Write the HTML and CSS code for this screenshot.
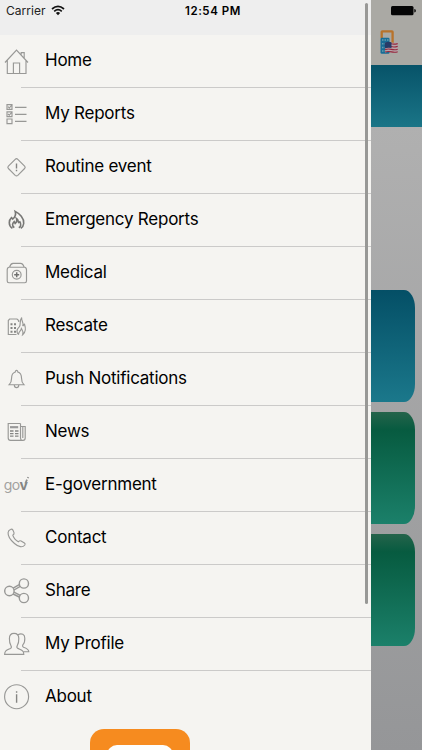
FILE: index.html
```html
<!DOCTYPE html>
<html lang="en">
<head>
    <meta charset="UTF-8">
    <meta name="viewport" content="width=device-width, initial-scale=1.0">
    <title>Menu</title>
    <link rel="stylesheet" href="styles.css">
</head>
<body>
    <div class="screen">
        <nav class="drawer">
            <div class="status-bar">
                <span class="carrier">Carrier</span>
                <svg class="wifi" width="14" height="11" viewBox="0 0 14 11">
                    <path d="M1 4 Q7 -1.2 13 4 M3.2 6.3 Q7 3 10.8 6.3" fill="none" stroke="#111" stroke-width="1.7"/>
                    <path d="M4.9 7.9 Q7 6.3 9.1 7.9 L7 10.2 Z" fill="#111"/>
                </svg>
                <span class="time">12:54 PM</span>
            </div>

            <ul class="menu">
                <li>
                    <svg class="icon" viewBox="0 0 34 52"><path d="M5 27.5 L16.5 15 L28 27.5 M7.3 25.5 V38.5 H26 V25.5 M13.4 38.5 V28 H19.6 V38.5 M21.2 19.5 V17.6 H24.2 V23"/></svg>
                    <span>Home</span>
                </li>
                <li>
                    <svg class="icon" viewBox="0 0 34 52"><path d="M7 16.6 H12 V21.4 H7 Z M7 23.8 H12 V28.6 H7 Z M7 31 H12 V35.6 H7 Z M15 19.3 H26.5 M15 26.3 H26.5 M15 33.4 H26.5 M8 18.7 L9.3 20 L12 16.8 M8 26 L9.3 27.2 L12 24"/></svg>
                    <span>My Reports</span>
                </li>
                <li>
                    <svg class="icon" viewBox="0 0 34 52"><path d="M15.2 18.3 Q16.5 17 17.8 18.3 L24.6 25.1 Q25.8 26.3 24.6 27.5 L17.8 34.3 Q16.5 35.5 15.2 34.3 L8.4 27.5 Q7.2 26.3 8.4 25.1 Z"/><path class="bold" d="M16.5 22.5 V27.4 M16.5 28.8 V30.2"/></svg>
                    <span>Routine event</span>
                </li>
                <li>
                    <svg class="icon" viewBox="0 0 34 52"><path class="flame" d="M12.4 34.4 C8 31.5 8.8 26 11.5 23.6 L12.8 25 C15.5 22.5 16.2 20.5 15.2 17.4 C19.5 19.5 24.3 24.5 23.7 29.5 Q23.3 33 20.8 34.4 M14.3 33.7 C11.6 31.7 12.4 29.2 14.2 27.6 L15.2 29.5 Q17.6 27.2 16.6 24.6 C19 26.2 18 28.2 18.6 28.6 L19.8 27.8 C21.5 30.5 20.8 32.7 18.8 33.8"/></svg>
                    <span>Emergency Reports</span>
                </li>
                <li>
                    <svg class="icon" viewBox="0 0 34 52"><path d="M9.5 20.2 Q10.7 16.5 13 16.4 H20.5 Q23 16.5 24.2 20.2 M9 20.2 H24.7 Q26.5 20.5 26.5 23 V34 Q26.5 35.7 24.8 35.7 H8.9 Q7.2 35.7 7.2 34 V23 Q7.2 20.5 9 20.2"/><circle cx="16.7" cy="27.7" r="4.4"/><path class="dark" d="M16.7 25.2 V30.2 M14.2 27.7 H19.2"/></svg>
                    <span>Medical</span>
                </li>
                <li>
                    <svg class="icon" viewBox="0 0 34 52"><path d="M16.5 34.5 H8.3 V20.5 L9.6 19 H17 L18.7 20.6 V22 M18.5 34.7 C15.8 31.6 17.2 28.8 19.2 26.8 C21.5 24.2 18.6 22 21.7 17.5 C20.9 21 24.2 22 22.7 26 L24.5 24.3 C26 28.6 25.4 32.6 22.7 34.7 C23.8 31.5 22.4 30.2 21.4 28.6 C21 31.2 18.4 31.2 18.5 34.7"/><path class="windows" d="M11.5 23.2 V33.5 M15 23.2 V33.5"/></svg>
                    <span>Rescate</span>
                </li>
                <li>
                    <svg class="icon" viewBox="0 0 34 52"><path d="M9.2 31.7 C11.5 29.5 11.6 28 11.6 25 C11.6 21.6 13 19.7 15.3 19 C15.2 16.9 17.9 16.9 17.8 19 C20.2 19.7 21.5 21.6 21.5 25 C21.5 28 21.7 29.5 23.9 31.7 Z M14.3 32 C14.4 35.5 18.7 35.5 18.8 32"/></svg>
                    <span>Push Notifications</span>
                </li>
                <li>
                    <svg class="icon" viewBox="0 0 34 52"><path d="M20.5 17.5 H8.2 V32 Q8.2 34.3 10.5 34.3 H23 Q25.2 34.3 25.2 32 V20.5 H20.5 M20.5 17.5 V32 Q20.6 34 22 34.2 M22.8 20.5 V32"/><path class="print" d="M10 21.2 H18.2"/><path class="bold" d="M10 25 H13.5 M15 25 H18.5 M10 27.6 H13.5 M15 27.6 H18.5 M10 30.1 H13.5 M15 30.1 H18.5"/></svg>
                    <span>News</span>
                </li>
                <li>
                    <svg class="icon" viewBox="0 0 34 52"><text x="3.7" y="31" class="gov">go<tspan class="gov-v">v</tspan></text><path class="tick" d="M25.3 24.5 L27 20.7 M27.8 19.2 L28.3 18.2"/></svg>
                    <span>E-government</span>
                </li>
                <li>
                    <svg class="icon" viewBox="0 0 34 52"><path d="M10.5 17.5 Q12 16.7 12.9 18.1 L14 20.6 Q14.5 21.9 12.8 23.2 C13.5 25.8 15.6 28.3 18.3 29.8 Q19.8 28.3 21.1 29 L24.4 31 Q25.6 31.9 24.8 33 C22.5 36 18.5 35 14.5 31.5 C10.2 27.8 7.8 23.8 8.1 20.5 Q8.4 18.3 10.5 17.5 Z"/></svg>
                    <span>Contact</span>
                </li>
                <li>
                    <svg class="icon share" viewBox="0 0 34 52"><circle cx="9.4" cy="26" r="4.7"/><circle cx="23.9" cy="18.5" r="4.6"/><circle cx="23.9" cy="33" r="4.6"/><path d="M13.2 23.1 L19.2 19.6 M14 25 L20.3 21.4 M14 27.1 L20.2 30.3 M13.1 29 L19.2 32"/></svg>
                    <span>Share</span>
                </li>
                <li>
                    <svg class="icon" viewBox="0 0 34 52"><path d="M4.6 36.4 C4.7 32.3 7 32 10.5 30.4 Q12 29.6 11 27.7 C9.3 25 9.3 23.5 9.4 20.5 C9.4 17 11.2 15.4 14 15.4 C17 15.4 18.8 17 18.8 20.5 C18.9 23.5 18.7 25.2 17.2 27.7 Q16.3 29.6 17.9 30.4 C21.5 32 23.8 32.4 23.8 36.4 Z M18 16.7 C21.7 14.6 24.9 16.7 24.8 20.3 C24.9 23 24.5 25.2 23 26.6 Q22 28.5 23.5 29.2 C27 30.4 28.7 31.2 28.8 33.7 H23.5"/></svg>
                    <span>My Profile</span>
                </li>
                <li>
                    <svg class="icon" viewBox="0 0 34 52"><circle cx="16.6" cy="25.7" r="12"/><path class="bold" d="M16.6 23.3 V31.8 M16.6 20.3 V21.8"/></svg>
                    <span>About</span>
                </li>
            </ul>

            <div class="logo"><div class="logo-screen"></div></div>
            <div class="scrollbar"></div>
        </nav>

        <main class="page">
            <header class="page-header">
                <svg width="51" height="65" viewBox="0 0 51 65">
                    <rect x="20" y="6" width="22.5" height="9.3" rx="1.5" fill="#050505"/>
                    <path d="M43.3 9 Q44.9 9.2 44.9 10.7 Q44.9 12.2 43.3 12.4 Z" fill="#050505"/>
                    <path d="M10.7 38 V31.8 Q10.7 31.3 11.2 31.3 H21 Q21.6 31.3 21.6 32 V43" fill="none" stroke="#b8732b" stroke-width="2.3"/>
                    <rect x="9.5" y="37.7" width="9" height="16" rx="1.3" fill="#176d96"/>
                    <path d="M11 40 H17.5 M11 43.7 H17.5 M11 47.4 H17.5 M11 51 H17.5" stroke="#679bad" stroke-width="1.5" stroke-dasharray="1.5 1"/>
                    <path d="M14 43 Q17 41.5 20.5 42.5 T26.7 42.3 V52.5 Q23.5 53.5 20.5 52.3 T14 52.7 Z" fill="#b6a4a9"/>
                    <path d="M20 43.7 Q23 44.6 26.7 43.6 M20 46.5 Q23 47.4 26.7 46.4 M14 49.7 Q17 48.5 20.5 49.4 T26.7 49.2 M14 52 Q17 51 20.5 51.9 T26.7 51.7" fill="none" stroke="#95273d" stroke-width="1.1"/>
                    <path d="M13.8 42.7 Q17 41.2 20.5 42.3 V48 Q17 47.2 13.8 48.4 Z" fill="#263b68"/>
                </svg>
            </header>
            <div class="banner"></div>
            <div class="cards">
                <div class="card blue"></div>
                <div class="card green"></div>
                <div class="card green"></div>
            </div>
        </main>
    </div>
</body>
</html>
```
FILE: styles.css
```css
body {
    margin: 0;
    font-family: Inter, "Liberation Sans", sans-serif;
    color: #000;
}

.screen {
    display: flex;
    width: 422px;
    height: 750px;
    overflow: hidden;
}

/* side menu */
.drawer {
    position: relative;
    width: 371px;
    flex: none;
    overflow: hidden;
    background-color: #f5f4f1;
}

.status-bar {
    display: flex;
    height: 35px;
    padding-left: 6px;
    background-color: #eeeeee;
    line-height: 22px;
    white-space: nowrap;
}

.carrier {
    width: 40px;
    font-size: 12px;
    letter-spacing: 0.05px;
    color: #222;
}

.wifi {
    margin: 5px 0 0 5px;
}

.time {
    margin-left: 120px;
    font-size: 11.5px;
    font-weight: 600;
    letter-spacing: 0.55px;
}

.menu {
    list-style: none;
    margin: 0;
    padding: 0;
}

.menu li {
    display: flex;
    height: 53px;
}

.menu li span {
    flex: 1;
    line-height: 50px;
    font-size: 17px;
    letter-spacing: -0.24px;
    padding-left: 24px;
    margin-left: -13px;
    border-bottom: 1px solid #cbcac9;
    box-sizing: border-box;
}

.menu li:last-child span {
    border-bottom: none;
}

.icon {
    width: 34px;
    height: 52px;
    flex: none;
    fill: none;
    stroke: #989896;
    stroke-width: 1.15;
}

.icon .bold {
    stroke: #858583;
    stroke-width: 1.4;
}

.icon .flame {
    stroke: #777775;
    stroke-width: 1.6;
}

.icon .dark {
    stroke: #70706f;
    stroke-width: 1.5;
}

.icon .windows {
    stroke: #858583;
    stroke-width: 2;
    stroke-dasharray: 2 1.8;
}

.icon .print {
    stroke: #999;
    stroke-width: 2.2;
}

.icon .tick {
    stroke: #8d8d8b;
    stroke-width: 1.8;
}

.share {
    stroke-width: 1.4;
}

.gov {
    font-size: 14px;
    letter-spacing: -0.6px;
    fill: #a2a19f;
    stroke: none;
}

.gov-v {
    font-weight: 700;
    fill: #858583;
}

.logo {
    width: 100px;
    height: 100px;
    margin: 5px 0 0 90px;
    padding: 16px 17px;
    box-sizing: border-box;
    border-radius: 14px;
    background-color: #f68b1f;
}

.logo-screen {
    height: 68px;
    border-radius: 10px;
    background-color: #fdfdfb;
}

.scrollbar {
    position: absolute;
    top: 3px;
    right: 3px;
    width: 3px;
    height: 601px;
    border-radius: 2px;
    background-color: #989896;
}

/* dimmed page behind the menu */
.page {
    flex: 1;
    background: linear-gradient(#b0b0b0 126px, #959698);
}

.page-header {
    height: 65px;
    background-color: #aaa9a4;
}

.banner {
    height: 61.5px;
    background: linear-gradient(#075369, #1a7587);
}

.cards {
    display: flex;
    flex-direction: column;
    gap: 10.2px;
    margin-top: 163px;
}

.card {
    width: 44px;
    height: 112px;
    border-radius: 0 11px 11px 0 / 0 18px 18px 0;
}

.blue {
    background: linear-gradient(#044f66, #1b788b);
}

.green {
    background: linear-gradient(#25644b, #075b40 16%, #1b806a);
}
```
